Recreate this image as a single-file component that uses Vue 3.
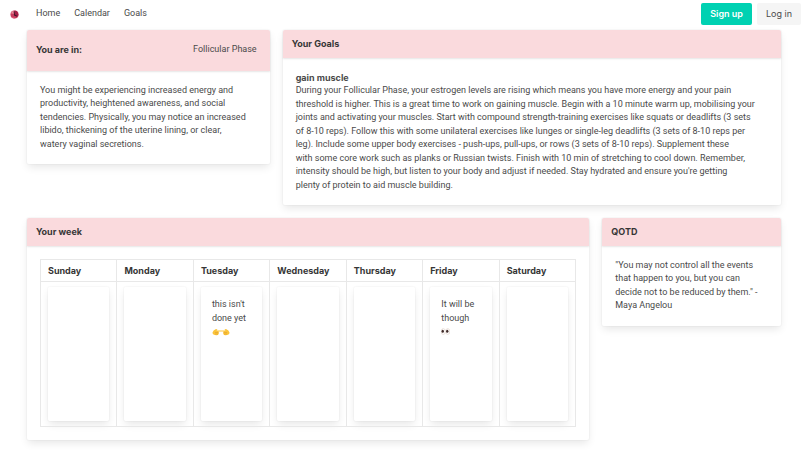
<template>
  <div class="page">
    <nav class="navbar" aria-label="main navigation">
      <a class="navbar__brand" href="#" aria-label="Start page">
        <svg class="navbar__logo" viewBox="0 0 20 20" aria-hidden="true">
          <circle cx="10" cy="10" r="9" fill="#c93b5d" />
          <path d="M10 1a9 9 0 0 1 7 14l-6-5z" fill="#a51f47" />
          <path d="M2 7a9 9 0 0 1 7-6v8z" fill="#ee8798" />
          <path d="M8 3l2 0 1 7 5 3-1 2-6-3z" fill="#3d1428" />
          <path d="M3 14q4 4 9 4-5 3-9-4z" fill="#e0657f" />
        </svg>
      </a>
      <div class="navbar__links">
        <a v-for="link in links" :key="link" class="navbar__link" href="#">{{ link }}</a>
      </div>
      <div class="navbar__buttons">
        <button type="button" class="button button--primary">Sign up</button>
        <button type="button" class="button">Log in</button>
      </div>
    </nav>

    <main class="columns">
      <section class="card card--phase">
        <header class="card__header card__header--tall">
          <h2 class="card__title">You are in:</h2>
          <span class="card__phase">Follicular Phase</span>
        </header>
        <p class="card__content">
          You might be experiencing increased energy and<br />
          productivity, heightened awareness, and social<br />
          tendencies. Physically, you may notice an increased<br />
          libido, thickening of the uterine lining, or clear,<br />
          watery vaginal secretions.
        </p>
      </section>

      <section class="card card--goals">
        <header class="card__header">
          <h2 class="card__title">Your Goals</h2>
        </header>
        <div class="card__content">
          <h3 class="goal__name">gain muscle</h3>
          <p class="goal__text">
            During your Follicular Phase, your estrogen levels are rising which means you have more energy and your pain<br />
            threshold is higher. This is a great time to work on gaining muscle. Begin with a 10 minute warm up, mobilising your<br />
            joints and activating your muscles. Start with compound strength-training exercises like squats or deadlifts (3 sets<br />
            of 8-10 reps). Follow this with some unilateral exercises like lunges or single-leg deadlifts (3 sets of 8-10 reps per<br />
            leg). Include some upper body exercises - push-ups, pull-ups, or rows (3 sets of 8-10 reps). Supplement these<br />
            with some core work such as planks or Russian twists. Finish with 10 min of stretching to cool down. Remember,<br />
            intensity should be high, but listen to your body and adjust if needed. Stay hydrated and ensure you're getting<br />
            plenty of protein to aid muscle building.
          </p>
        </div>
      </section>

      <section class="card card--week">
        <header class="card__header">
          <h2 class="card__title">Your week</h2>
        </header>
        <div class="card__content">
          <table class="week">
            <thead>
              <tr>
                <th v-for="day in days" :key="day.name" class="week__head" scope="col">{{ day.name }}</th>
              </tr>
            </thead>
            <tbody>
              <tr>
                <td v-for="day in days" :key="day.name" class="week__cell">
                  <div class="week__card">
                    {{ day.note }}
                    <svg v-if="day.icon === 'hands'" class="week__icon" width="18" height="9" viewBox="0 0 36 18" role="img" aria-label="pointing hands">
                      <path d="M1 11q1-5 7-7l3 1-2 2h9v2h-5q2 4-1 7-5 1-9-1-2-1-2-4z" fill="#fbc43a" />
                      <path d="M35 11q-1-5-7-7l-3 1 2 2h-9v2h5q-2 4 1 7 5 1 9-1 2-1 2-4z" fill="#fbc43a" />
                      <path d="M6 11h7M6 14h6M23 11h7M24 14h6" stroke="#dc982b" stroke-width="1" fill="none" />
                    </svg>
                    <svg v-if="day.icon === 'eyes'" class="week__icon" width="9" height="9" viewBox="0 0 18 18" role="img" aria-label="eyes">
                      <ellipse cx="4.5" cy="9" rx="4" ry="6" fill="#fff" stroke="#d9c6bd" />
                      <ellipse cx="13.5" cy="9" rx="4" ry="6" fill="#fff" stroke="#d9c6bd" />
                      <ellipse cx="3.5" cy="8.5" rx="2.4" ry="3" fill="#402c2a" />
                      <ellipse cx="12.5" cy="8.5" rx="2.4" ry="3" fill="#402c2a" />
                    </svg>
                  </div>
                </td>
              </tr>
            </tbody>
          </table>
        </div>
      </section>

      <section class="card card--quote">
        <header class="card__header">
          <h2 class="card__title">QOTD</h2>
        </header>
        <p class="card__content">
          "You may not control all the events<br />
          that happen to you, but you can<br />
          decide not to be reduced by them." -<br />
          Maya Angelou
        </p>
      </section>
    </main>
  </div>
</template>

<script setup>
const links = ['Home', 'Calendar', 'Goals']

const days = [
  { name: 'Sunday' },
  { name: 'Monday' },
  { name: 'Tuesday', note: "this isn't done yet", icon: 'hands' },
  { name: 'Wednesday' },
  { name: 'Thursday' },
  { name: 'Friday', note: 'It will be though', icon: 'eyes' },
  { name: 'Saturday' },
]
</script>

<style>
body {
  margin: 0;
  background: #ffffff;
}
</style>

<style scoped>
.page {
  font-family: Roboto, 'Liberation Sans', sans-serif;
  font-size: 9px;
  line-height: 1.5;
  color: #4a4a4a;
}

.navbar {
  display: flex;
  align-items: center;
  padding: 3px 5px 5px 10px;
}

.navbar__brand {
  display: flex;
}

.navbar__logo {
  width: 9px;
  height: 9px;
}

.navbar__links {
  display: flex;
  gap: 14px;
  margin-left: 17px;
}

.navbar__link {
  color: #4a4a4a;
  text-decoration: none;
}

.navbar__buttons {
  display: flex;
  gap: 5px;
  margin-left: auto;
  font-family: Inter, 'Liberation Sans', sans-serif;
}

.button {
  height: 22px;
  padding: 0 9px;
  border: 0;
  border-radius: 2px;
  background: #f5f5f5;
  color: #4a4a4a;
  font: inherit;
  cursor: pointer;
}

.button--primary {
  background: #00d1b2;
  color: #ffffff;
  font-weight: 600;
}

.columns {
  display: grid;
  grid-template-columns: repeat(12, minmax(0, 1fr));
  align-items: start;
  gap: 13px;
  padding: 0 25px 10px 27px;
}

.card {
  border-radius: 2px;
  background: #ffffff;
  box-shadow: 0 4px 9px -1px rgba(10, 10, 10, 0.1), 0 0 0 1px rgba(10, 10, 10, 0.02);
}

.card--phase {
  grid-column: span 4;
}

.card--goals {
  grid-column: span 8;
}

.card--week {
  grid-column: span 9;
}

.card--quote {
  grid-column: span 3;
}

.card__header {
  display: flex;
  align-items: center;
  justify-content: space-between;
  padding: 7px 13px 7px 9px;
  border-radius: 2px 2px 0 0;
  background: #fadadd;
  box-shadow: 0 1px 2px rgba(10, 10, 10, 0.1);
}

.card__header--tall {
  padding-top: 13px;
  padding-bottom: 14px;
}

.card__title,
.goal__name,
.week__head {
  font-family: Inter, 'Liberation Sans', sans-serif;
  font-size: 9px;
  font-weight: 700;
}

.card__title {
  margin: 0;
  color: #363636;
}

.card__content {
  margin: 0;
  padding: 13px;
}

.goal__name,
.goal__text {
  margin: 0;
}

.week {
  width: 100%;
  border-collapse: collapse;
  table-layout: fixed;
}

.week__head {
  padding: 4px 7px;
  border: 1px solid #e8e8e8;
  color: #363636;
  text-align: left;
}

.week__cell {
  padding: 5px 7px;
  border: 1px solid #e8e8e8;
  vertical-align: top;
}

.week__card {
  box-sizing: border-box;
  height: 134px;
  padding: 11px;
  border-radius: 2px;
  box-shadow: 0 4px 9px -1px rgba(10, 10, 10, 0.1), 0 0 0 1px rgba(10, 10, 10, 0.02);
}

.week__icon {
  display: block;
  margin-top: 2px;
}
</style>
